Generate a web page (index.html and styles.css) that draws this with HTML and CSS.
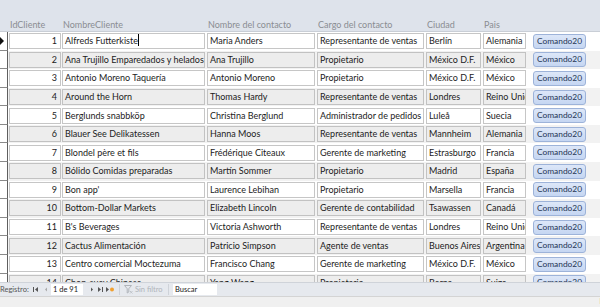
FILE: index.html
```html
<!DOCTYPE html>
<html lang="es">
<head>
  <meta charset="UTF-8">
  <title>Clientes</title>
  <link rel="stylesheet" href="styles.css">
</head>
<body>
  <div class="form">
    <div class="form-header">
      <span class="lbl c-id">IdCliente</span>
      <span class="lbl c-nombre">NombreCliente</span>
      <span class="lbl c-contacto">Nombre del contacto</span>
      <span class="lbl c-cargo">Cargo del contacto</span>
      <span class="lbl c-ciudad">Ciudad</span>
      <span class="lbl c-pais">Pais</span>
    </div>
    <div id="rows" class="rows"></div>
    <div class="nav-bar">
      <span class="nav-label">Registro:</span>
      <svg class="nav-icon first" width="8" height="7" viewBox="0 0 8 7"><rect x="1" y="1" width="1" height="5" fill="#555"/><path d="M6 1v5L3 3.5z" fill="#555"/></svg>
      <svg class="nav-icon prev" width="6" height="7" viewBox="0 0 6 7"><path d="M4 1.5v4L2 3.5z" fill="#aaa"/></svg>
      <span class="nav-pos">1 de 91</span>
      <svg class="nav-icon next" width="8" height="7" viewBox="0 0 8 7"><path d="M3 1.5v4l2-2z" fill="#555"/></svg>
      <svg class="nav-icon last" width="8" height="7" viewBox="0 0 8 7"><path d="M1 1v5l3-2.5z" fill="#555"/><rect x="5" y="1" width="1" height="5" fill="#555"/></svg>
      <svg class="nav-icon new" width="10" height="7" viewBox="0 0 10 7"><path d="M1 1v5l3-2.5z" fill="#555"/><circle cx="7" cy="3.5" r="2" fill="#f0a030"/></svg>
      <span class="nav-sep"></span>
      <span class="nav-filter">
        <svg width="9" height="9" viewBox="0 0 9 9"><path d="M0.5 0.5h7l-2.7 3.2v3.3l-1.6 1v-4.3z" fill="none" stroke="#b0b4ba"/><path d="M6 6l2.5 2.5M8.5 6L6 8.5" stroke="#c0c4ca"/></svg>
        <span>Sin filtro</span>
      </span>
      <span class="nav-sep"></span>
      <span class="nav-search">Buscar</span>
    </div>
    <div class="status-bar"><span class="status-end">E</span></div>
  </div>

  <script>
    // Datos de clientes
    const clientes = [
      ['Alfreds Futterkiste', 'Maria Anders', 'Representante de ventas', 'Berlín', 'Alemania'],
      ['Ana Trujillo Emparedados y helados', 'Ana Trujillo', 'Propietario', 'México D.F.', 'México'],
      ['Antonio Moreno Taquería', 'Antonio Moreno', 'Propietario', 'México D.F.', 'México'],
      ['Around the Horn', 'Thomas Hardy', 'Representante de ventas', 'Londres', 'Reino Unido'],
      ['Berglunds snabbköp', 'Christina Berglund', 'Administrador de pedidos', 'Luleå', 'Suecia'],
      ['Blauer See Delikatessen', 'Hanna Moos', 'Representante de ventas', 'Mannheim', 'Alemania'],
      ['Blondel père et fils', 'Frédérique Citeaux', 'Gerente de marketing', 'Estrasburgo', 'Francia'],
      ['Bólido Comidas preparadas', 'Martín Sommer', 'Propietario', 'Madrid', 'España'],
      ['Bon app\'', 'Laurence Lebihan', 'Propietario', 'Marsella', 'Francia'],
      ['Bottom-Dollar Markets', 'Elizabeth Lincoln', 'Gerente de contabilidad', 'Tsawassen', 'Canadá'],
      ['B\'s Beverages', 'Victoria Ashworth', 'Representante de ventas', 'Londres', 'Reino Unido'],
      ['Cactus Alimentación', 'Patricio Simpson', 'Agente de ventas', 'Buenos Aires', 'Argentina'],
      ['Centro comercial Moctezuma', 'Francisco Chang', 'Gerente de marketing', 'México D.F.', 'México'],
      ['Chop-suey Chinese', 'Yang Wang', 'Propietario', 'Berna', 'Suiza']
    ];

    const rowsEl = document.getElementById('rows');
    const cols = ['c-nombre', 'c-contacto', 'c-cargo', 'c-ciudad', 'c-pais'];

    clientes.forEach((c, i) => {
      const row = document.createElement('div');
      row.className = 'row' + (i % 2 ? ' alt' : '');
      let html = `<span class="selector">${i === 0 ? '<span class="arrow"></span>' : ''}</span>`;
      html += `<span class="field c-id num">${i + 1}</span>`;
      c.forEach((v, j) => {
        const caret = (i === 0 && j === 0) ? '<span class="caret"></span>' : '';
        html += `<span class="field ${cols[j]}">${v}${caret}</span>`;
      });
      html += '<span class="cmd-btn">Comando20</span>';
      row.innerHTML = html;
      rowsEl.appendChild(row);
    });
  </script>
</body>
</html>
```

FILE: styles.css
```css
html, body {
  margin: 0;
  padding: 0;
}
body {
  width: 600px;
  height: 307px;
  overflow: hidden;
  font-family: 'Lato', 'Open Sans', sans-serif;
  font-size: 9px;
  color: #1c1c1c;
  background-color: #fff;
}
.form {
  display: flex;
  flex-direction: column;
  height: 307px;
}
.form-header {
  height: 31px;
  flex: none;
  display: flex;
  align-items: flex-end;
  padding-left: 9px;
  background-color: #dee3eb;
  box-sizing: border-box;
}
.lbl {
  color: #8a8d92;
  line-height: 12px;
  padding-left: 1px;
  box-sizing: border-box;
  white-space: nowrap;
}
.rows {
  flex: 1;
  overflow: hidden;
  border-top: 1px solid #c9ced6;
}
.row {
  height: 18.58px;
  display: flex;
  align-items: center;
  background-color: #fff;
}
.row.alt {
  background-color: #f2f2f2;
}
.selector {
  position: relative;
  width: 8px;
  height: 100%;
  flex: none;
  box-sizing: border-box;
  border-right: 1px solid #5f5f5f;
  border-bottom: 1px solid #8a8a8a;
  background-color: #fff;
  margin-right: 1px;
}
.arrow {
  position: absolute;
  left: 0;
  top: 5px;
  border-left: 4px solid #111;
  border-top: 4px solid transparent;
  border-bottom: 4px solid transparent;
}
.field {
  height: 16px;
  box-sizing: border-box;
  border: 1px solid #c6c6c6;
  background-color: #fff;
  line-height: 14px;
  padding: 0 2px;
  white-space: nowrap;
  overflow: hidden;
  flex: none;
  margin-right: 2px;
}
.row.alt .field {
  background-color: #ededed;
  border-color: #c2c2c2;
}
.field.num {
  text-align: right;
  padding-right: 3px;
}
.caret {
  display: inline-block;
  width: 1px;
  height: 12px;
  vertical-align: -2px;
  background-color: #000;
}
.c-id { width: 52px; margin-right: 1px; }
.c-nombre { width: 143px; }
.c-contacto { width: 108px; }
.c-cargo { width: 107px; }
.c-ciudad { width: 55px; }
.c-pais { width: 43px; margin-right: 7px; }
.form-header .c-id { margin-right: 1px; }
.form-header .c-nombre,
.form-header .c-contacto,
.form-header .c-cargo,
.form-header .c-ciudad { margin-right: 2px; }
.cmd-btn {
  width: 53px;
  height: 15px;
  flex: none;
  box-sizing: border-box;
  border: 1px solid #9db3d9;
  border-radius: 3px;
  background: linear-gradient(#dde7f8, #c5d6f2);
  color: #1f3554;
  font-size: 8.4px;
  text-align: center;
  line-height: 13px;
  white-space: nowrap;
}
.nav-bar {
  height: 13px;
  flex: none;
  display: flex;
  align-items: center;
  background-color: #e6e9ee;
  border-top: 1px solid #cfd3d9;
  font-size: 7.5px;
  color: #444;
  white-space: nowrap;
}
.nav-label {
  width: 31px;
  color: #555;
}
.nav-icon { flex: none; }
.nav-icon.first { margin-left: 1px; margin-right: 3px; }
.nav-icon.prev { margin-right: 2px; }
.nav-icon.next { margin-left: 5px; margin-right: 1px; }
.nav-icon.last { margin-right: 0; }
.nav-pos {
  width: 32px;
  height: 11px;
  line-height: 11px;
  background-color: #fff;
  padding-left: 2px;
  box-sizing: border-box;
  color: #222;
}
.nav-sep {
  width: 1px;
  height: 11px;
  background-color: #cfd3d9;
  margin: 0 4px;
}
.nav-filter {
  display: flex;
  align-items: center;
  gap: 2px;
  width: 40px;
  color: #b0b4ba;
}
.nav-search {
  width: 44px;
  height: 11px;
  line-height: 11px;
  background-color: #fff;
  padding-left: 2px;
  box-sizing: border-box;
  color: #222;
}
.status-bar {
  height: 10px;
  flex: none;
  background-color: #f0f0f0;
  border-top: 1px solid #d4d4d4;
  display: flex;
  justify-content: flex-end;
  font-size: 8px;
  line-height: 9px;
}
.status-end {
  margin-right: -4px;
}
```
